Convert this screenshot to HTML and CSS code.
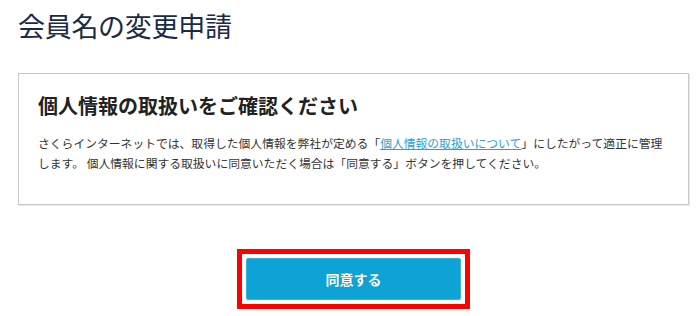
FILE: index.html
```html
<!DOCTYPE html>
<html lang="ja">
<head>
<meta charset="utf-8">
<title>会員名の変更申請</title>
<link rel="stylesheet" href="styles.css">
</head>
<body>
<div class="page">
  <h1 class="title">会員名の変更申請</h1>
  <section class="notice">
    <h2 class="notice-heading">個人情報の取扱いをご確認ください</h2>
    <p class="notice-text">さくらインターネットでは、取得した個人情報を弊社が定める「<a class="link" href="#">個人情報の取扱いについて</a>」にしたがって適正に管理します。&nbsp;個人情報に関する取扱いに同意いただく場合は「同意する」ボタンを押してください。</p>
  </section>
  <div class="actions">
    <div class="highlight">
      <button class="agree" type="button">同意する</button>
    </div>
  </div>
</div>
</body>
</html>
```
FILE: styles.css
```css
html, body {
  margin: 0;
  padding: 0;
  background: #ffffff;
}
body {
  font-family: "Noto Sans CJK JP", "Noto Sans", sans-serif;
  color: #333333;
}
.page {
  width: 671px;
  padding: 0 0 0 18px;
}
.title {
  margin: 7px 0 28px;
  font-size: 27px;
  line-height: 38px;
  font-weight: 400;
  color: #1b2a48;
  letter-spacing: -0.3px;
}
.notice {
  border: 1px solid #c9c9c9;
  box-shadow: 1px 1px 0 #e6e6e6;
  padding: 18px 19px 31px;
}
.notice-heading {
  margin: 0 0 13px;
  font-size: 20px;
  line-height: 28px;
  font-weight: 700;
  color: #222222;
}
.notice-text {
  margin: 0;
  font-size: 11.8px;
  line-height: 20px;
  color: #333333;
}
.link {
  color: #2a9fd6;
  text-decoration: underline;
}
.actions {
  display: flex;
  justify-content: center;
  padding-top: 44px;
}
.highlight {
  border: 5px solid #ff0000;
  padding: 4px;
  background: #ffffff;
}
.agree {
  display: block;
  width: 215px;
  height: 42px;
  border: 1px solid #38b4de;
  border-radius: 2px;
  background: #0ea3d5;
  color: #ffffff;
  font-family: "Noto Sans CJK JP", "Noto Sans", sans-serif;
  font-size: 14px;
  font-weight: 700;
  text-shadow: 0 0 1px rgba(0, 0, 0, 0.15);
  cursor: pointer;
}
```
